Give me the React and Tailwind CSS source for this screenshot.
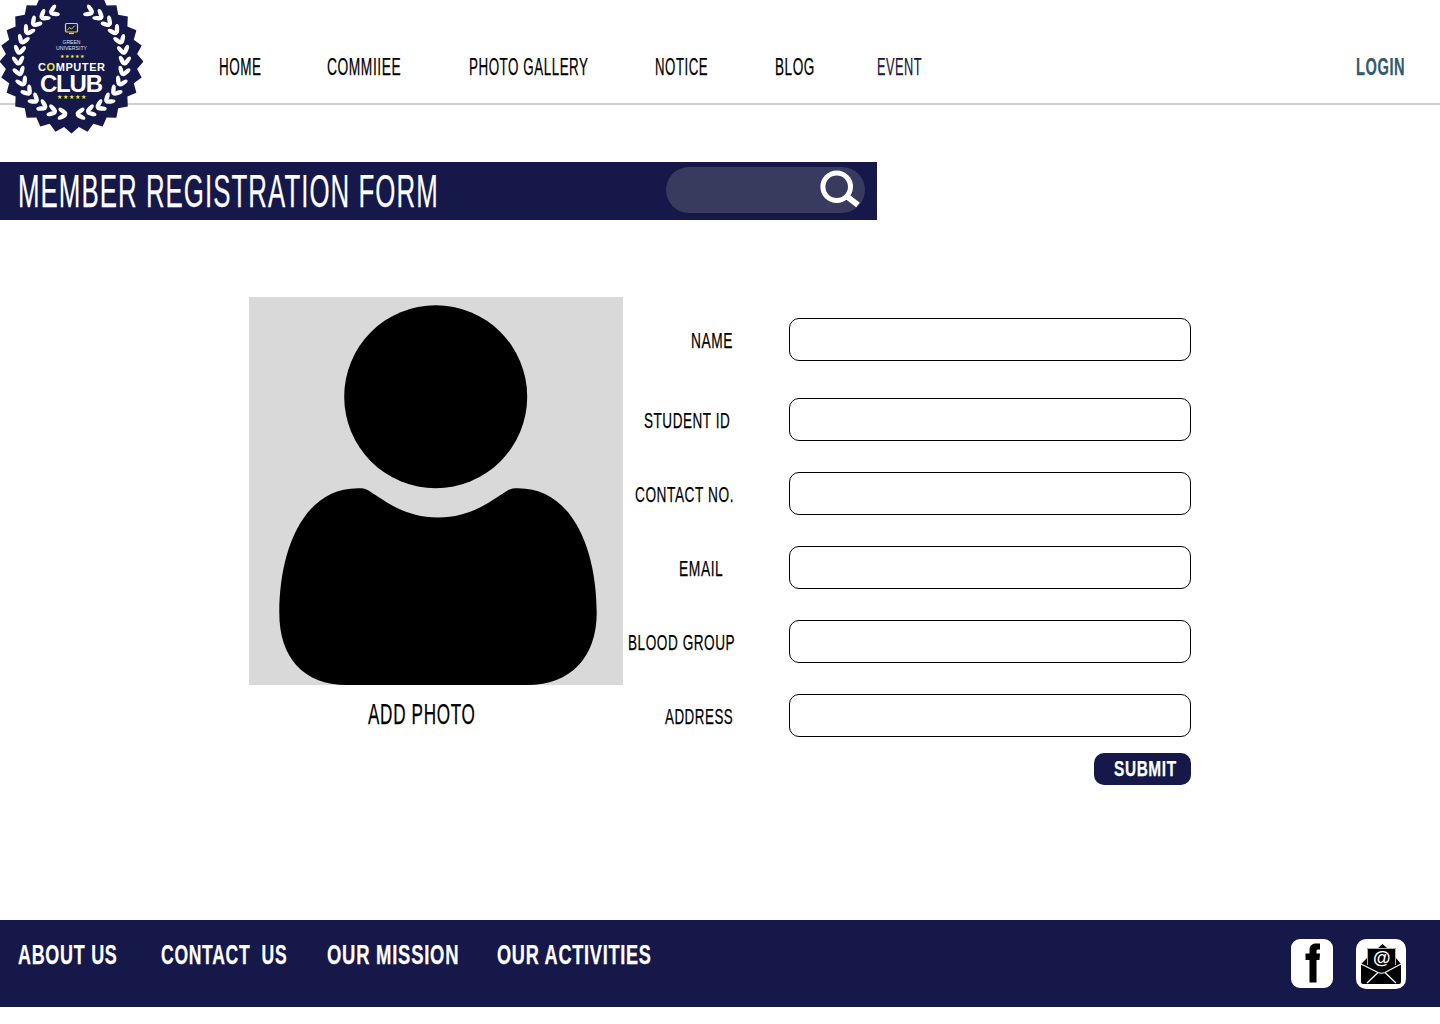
import React from 'react'

const navy = '#16184a'

// Oswald isn't installed, so the text is squeezed from Liberation Sans
const Cond = ({ box, scale, children }) => (
  <div className={`shrink-0 whitespace-pre tracking-[.04em] [-webkit-text-stroke:.25px] ${box}`}>
    <span className={`inline-block origin-left ${scale}`}>{children}</span>
  </div>
)

const badgePoints = () => {
  const pts = []
  for (let i = 0; i < 56; i++) {
    const a = (i / 56) * Math.PI * 2
    const r = i % 2 === 0 ? 72 : 66
    pts.push(`${(71.5 + r * Math.sin(a)).toFixed(1)},${(61.5 - r * Math.cos(a)).toFixed(1)}`)
  }
  return pts.join(' ')
}

const leaves = () => {
  const out = []
  for (let i = 0; i < 14; i++) {
    const deg = 5 + i * 11.6
    for (const side of [-1, 1]) {
      const a = (deg * Math.PI) / 180
      const x = 71.5 + side * 53 * Math.sin(a)
      const y = 61.5 + 53 * Math.cos(a)
      const dir = side * (90 - deg)
      out.push(
        <ellipse key={`o${i}${side}`} cx="0" cy="-5" rx="2.200" ry="5.200" fill="#fff"
          transform={`translate(${x.toFixed(1)} ${y.toFixed(1)}) rotate(${dir + side * 32})`} />,
        <ellipse key={`i${i}${side}`} cx="0" cy="-5" rx="2.200" ry="5.200" fill="#fff"
          transform={`translate(${x.toFixed(1)} ${y.toFixed(1)}) rotate(${dir - side * 32})`} />,
      )
    }
  }
  return out
}

const Logo = () => (
  <svg className="absolute left-0 top-0" width="143" height="136" viewBox="0 0 143 136" fontFamily="Liberation Sans, sans-serif">
    <polygon points={badgePoints()} fill={navy} />
    {leaves()}
    <rect x="65.500" y="23.500" width="12" height="8.500" rx="1" fill="none" stroke="#e6d84a" strokeWidth="1.200" />
    <path d="M67 30.500l2.500-3 2 1.500 3.500-3.500" fill="none" stroke="#e6d84a" strokeWidth="0.900" />
    <path d="M69 33.500h5" stroke="#e6d84a" strokeWidth="1.200" />
    <text x="71.500" y="44" textAnchor="middle" fontSize="5" fill="#dfe0ea" textLength="18" lengthAdjust="spacingAndGlyphs">GREEN</text>
    <text x="71.500" y="50" textAnchor="middle" fontSize="5" fill="#dfe0ea" textLength="31" lengthAdjust="spacingAndGlyphs">UNIVERSITY</text>
    <text x="71.500" y="58" textAnchor="middle" fontSize="5" fill="#f1e64b" textLength="24">★★★★★</text>
    <text x="71.500" y="71" textAnchor="middle" fontSize="11" fontWeight="700" fill="#fff" textLength="67">C<tspan fill="#f1e64b">O</tspan>MPUTER</text>
    <text x="71.500" y="92" textAnchor="middle" fontSize="24" fontWeight="700" fill="#fff" textLength="63">CLUB</text>
    <text x="71.500" y="99" textAnchor="middle" fontSize="5.500" fill="#f1e64b" textLength="29">★★★★★</text>
  </svg>
)

const Field = ({ box, scale, label, rowClass }) => (
  <div className={`flex items-center ${rowClass}`}>
    <Cond box={`w-[166px] text-[22px] leading-none pt-[2px] text-black ${box}`} scale={scale}>{label}</Cond>
    <input className="h-[43px] w-[402px] rounded-[10px] border border-black bg-white" />
  </div>
)

const App = () => {
  return (
    <div className="relative min-h-[1024px] bg-white font-['Liberation_Sans',sans-serif]">
      <header className="relative flex h-[105px] items-start border-b-2 border-[#cfcfcf] pl-[219px] pr-[35px] pt-[56px] text-[23px] leading-none text-black">
        <Cond box="w-[108px]" scale="scale-x-[.585]">HOME</Cond>
        <Cond box="w-[142px]" scale="scale-x-[.6]">COMMIIEE</Cond>
        <Cond box="w-[186px]" scale="scale-x-[.582]">PHOTO GALLERY</Cond>
        <Cond box="w-[120px]" scale="scale-x-[.575]">NOTICE</Cond>
        <Cond box="w-[102px]" scale="scale-x-[.59]">BLOG</Cond>
        <Cond box="w-[45px] text-[#16184a]" scale="scale-x-[.555]">EVENT</Cond>
        <Cond box="ml-auto w-[49px] font-bold text-[#345a70]" scale="scale-x-[.635]">LOGIN</Cond>
      </header>
      <Logo />

      <section className="mt-[57px] flex h-[58px] w-[877px] items-center justify-between bg-[#16184a] pl-[18px] pr-[12px]">
        <Cond box="w-[419px] text-[46px] leading-none text-white" scale="scale-x-[.562]">MEMBER REGISTRATION FORM</Cond>
        <div className="mb-[2px] flex h-[46px] w-[199px] items-center justify-end rounded-full bg-[#383a5e] pr-[5px]">
          <svg width="40" height="40" viewBox="0 0 40 40" fill="none" stroke="#fff">
            <circle cx="16.700" cy="16.700" r="13.800" strokeWidth="5" />
            <path d="M27 26.500l11 8.500" strokeWidth="6" />
          </svg>
        </div>
      </section>

      <main className="flex pl-[249px] pt-[77px]">
        <div className="w-[374px]">
          <div className="h-[388px] bg-[#d9d9d9]">
            <svg width="374" height="388" viewBox="0 0 374 388" fill="#000">
              <circle cx="186.700" cy="99.700" r="91.500" />
              <path d="M109 191.300C113 191.300 116 191.500 119.500 193.500C135 203 155 220.500 189 220.500C223 220.500 243 203 258.500 193.500C262 191.500 265 191.300 269 191.300C325 191.300 347.700 255 347.700 316C347.700 360 322 388 278 388L98 388C54 388 30.300 360 30.300 316C30.300 255 53 191.300 109 191.300Z" />
            </svg>
          </div>
          <Cond box="mt-[15px] ml-[119px] w-[108px] text-[29px] leading-none text-black" scale="scale-x-[.59]">ADD PHOTO</Cond>
        </div>

        <div className="w-[568px] pt-[21px]">
          <Field label="NAME" box="pl-[68px]" scale="scale-x-[.625]" />
          <Field label="STUDENT ID" box="pl-[21px]" scale="scale-x-[.615]" rowClass="mt-[37px]" />
          <Field label="CONTACT NO." box="pl-[12px]" scale="scale-x-[.622]" rowClass="mt-[31px]" />
          <Field label="EMAIL" box="pl-[56px]" scale="scale-x-[.63]" rowClass="mt-[31px]" />
          <Field label="BLOOD GROUP" box="pl-[5px]" scale="scale-x-[.618]" rowClass="mt-[31px]" />
          <Field label="ADDRESS" box="pl-[42px]" scale="scale-x-[.607]" rowClass="mt-[31px]" />
          <button className="ml-auto mt-[16px] flex h-[32px] w-[97px] items-center rounded-[10px] bg-[#16184a] pl-[20px] text-white">
            <Cond box="w-[63px] text-left text-[22px] font-bold leading-none [-webkit-text-stroke:.5px]" scale="scale-x-[.7]">SUBMIT</Cond>
          </button>
        </div>
      </main>

      <footer className="mt-[135px] flex h-[87px] items-start bg-[#16184a] pl-[18px] pr-[34px] pt-[20px] text-[27px] font-bold leading-[30px] text-white">
        <Cond box="w-[143px] [-webkit-text-stroke:.6px]" scale="scale-x-[.665]">ABOUT US</Cond>
        <Cond box="w-[166px] [-webkit-text-stroke:.6px]" scale="scale-x-[.65]">CONTACT  US</Cond>
        <Cond box="w-[170px] [-webkit-text-stroke:.6px]" scale="scale-x-[.684]">OUR MISSION</Cond>
        <Cond box="w-[154px] [-webkit-text-stroke:.6px]" scale="scale-x-[.672]">OUR ACTIVITIES</Cond>
        <div className="ml-auto -mt-[1px] flex gap-[23px]">
          <div className="h-[49px] w-[42px] rounded-[9px] bg-white">
            <svg width="42" height="49" viewBox="0 0 42 49">
              <path d="M18.500 43.500V21H14.500V14.500H18.500V11.500C18.500 6.500 21 4.500 25 4.500H29V10.500H27C25.500 10.500 25.500 11.500 25.500 12.500V14.500H29L28.500 21H25.500V43.500Z" fill="#000" />
            </svg>
          </div>
          <div className="h-[50px] w-[50px] rounded-[10px] bg-white">
            <svg width="50" height="50" viewBox="0 0 50 50">
              <path d="M5 25L11 19V9H22L26.500 5L31 9H40V19L45 25V43Q45 45 43 45H7Q5 45 5 43Z" fill="#000" />
              <path d="M11.500 26V9.500H39.500V26" fill="none" stroke="#fff" strokeWidth="0.700" />
              <text x="25.700" y="25" textAnchor="middle" fontSize="18" fill="#fff" fontFamily="Liberation Sans, sans-serif">@</text>
              <path d="M5 25L22 33.500Q25.500 35 29 33.500L45 25M11 44L22 33.500M40 44L29 33.500" fill="none" stroke="#fff" strokeWidth="1.200" />
            </svg>
          </div>
        </div>
      </footer>
    </div>
  )
}

export default App
